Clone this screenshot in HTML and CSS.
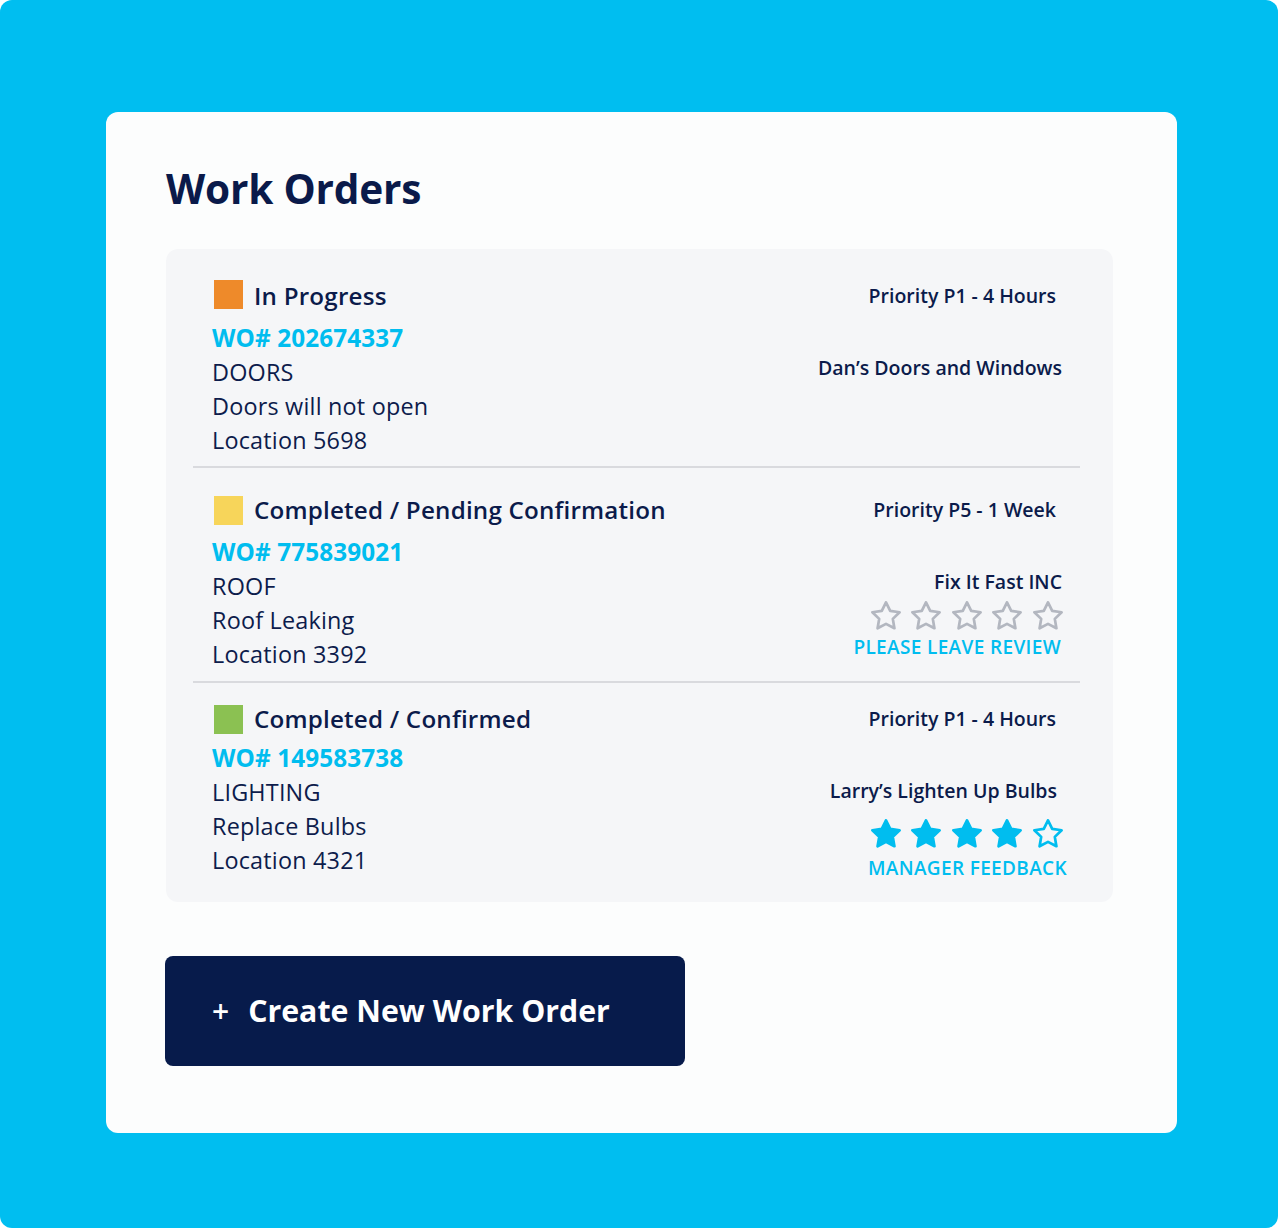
FILE: index.html
```html
<!DOCTYPE html>
<html lang="en">
<head>
<meta charset="utf-8">
<title>Work Orders</title>
<link rel="stylesheet" href="styles.css">
</head>
<body>
<div class="frame">
  <div class="card">
    <h1 class="title">Work Orders</h1>
    <div class="panel">
      <div class="order order--first">
        <div class="order-main">
          <div class="status"><span class="swatch swatch--orange"></span><span class="status-text">In Progress</span></div>
          <div class="wo">WO# 202674337</div>
          <div class="line">DOORS</div>
          <div class="line">Doors will not open</div>
          <div class="line">Location 5698</div>
        </div>
        <div class="order-side">
          <div class="priority">Priority P1 - 4 Hours</div>
          <div class="vendor">Dan’s Doors and Windows</div>
        </div>
      </div>

      <div class="order order--second">
        <div class="order-main">
          <div class="status"><span class="swatch swatch--yellow"></span><span class="status-text">Completed / Pending Confirmation</span></div>
          <div class="wo">WO# 775839021</div>
          <div class="line">ROOF</div>
          <div class="line">Roof Leaking</div>
          <div class="line">Location 3392</div>
        </div>
        <div class="order-side">
          <div class="priority">Priority P5 - 1 Week</div>
          <div class="vendor">Fix It Fast INC</div>
          <div class="rating rating--empty">
            <svg class="star" viewBox="1 1 22 21.3"><polygon points="12,2 15.09,8.26 22,9.27 17,14.14 18.18,21.02 12,17.77 5.82,21.02 7,14.14 2,9.27 8.91,8.26"/></svg>
            <svg class="star" viewBox="1 1 22 21.3"><polygon points="12,2 15.09,8.26 22,9.27 17,14.14 18.18,21.02 12,17.77 5.82,21.02 7,14.14 2,9.27 8.91,8.26"/></svg>
            <svg class="star" viewBox="1 1 22 21.3"><polygon points="12,2 15.09,8.26 22,9.27 17,14.14 18.18,21.02 12,17.77 5.82,21.02 7,14.14 2,9.27 8.91,8.26"/></svg>
            <svg class="star" viewBox="1 1 22 21.3"><polygon points="12,2 15.09,8.26 22,9.27 17,14.14 18.18,21.02 12,17.77 5.82,21.02 7,14.14 2,9.27 8.91,8.26"/></svg>
            <svg class="star" viewBox="1 1 22 21.3"><polygon points="12,2 15.09,8.26 22,9.27 17,14.14 18.18,21.02 12,17.77 5.82,21.02 7,14.14 2,9.27 8.91,8.26"/></svg>
          </div>
          <div class="side-link">PLEASE LEAVE REVIEW</div>
        </div>
      </div>

      <div class="order order--third">
        <div class="order-main">
          <div class="status"><span class="swatch swatch--green"></span><span class="status-text">Completed / Confirmed</span></div>
          <div class="wo">WO# 149583738</div>
          <div class="line">LIGHTING</div>
          <div class="line">Replace Bulbs</div>
          <div class="line">Location 4321</div>
        </div>
        <div class="order-side">
          <div class="priority">Priority P1 - 4 Hours</div>
          <div class="vendor">Larry’s Lighten Up Bulbs</div>
          <div class="rating rating--rated">
            <svg class="star star--on" viewBox="1 1 22 21.3"><polygon points="12,2 15.09,8.26 22,9.27 17,14.14 18.18,21.02 12,17.77 5.82,21.02 7,14.14 2,9.27 8.91,8.26"/></svg>
            <svg class="star star--on" viewBox="1 1 22 21.3"><polygon points="12,2 15.09,8.26 22,9.27 17,14.14 18.18,21.02 12,17.77 5.82,21.02 7,14.14 2,9.27 8.91,8.26"/></svg>
            <svg class="star star--on" viewBox="1 1 22 21.3"><polygon points="12,2 15.09,8.26 22,9.27 17,14.14 18.18,21.02 12,17.77 5.82,21.02 7,14.14 2,9.27 8.91,8.26"/></svg>
            <svg class="star star--on" viewBox="1 1 22 21.3"><polygon points="12,2 15.09,8.26 22,9.27 17,14.14 18.18,21.02 12,17.77 5.82,21.02 7,14.14 2,9.27 8.91,8.26"/></svg>
            <svg class="star" viewBox="1 1 22 21.3"><polygon points="12,2 15.09,8.26 22,9.27 17,14.14 18.18,21.02 12,17.77 5.82,21.02 7,14.14 2,9.27 8.91,8.26"/></svg>
          </div>
          <div class="side-link side-link--feedback">MANAGER FEEDBACK</div>
        </div>
      </div>
    </div>

    <button class="create-btn" type="button"><span class="plus">+</span><span>Create New Work Order</span></button>
  </div>
</div>
</body>
</html>
```

FILE: styles.css
```css
* {
  box-sizing: border-box;
}

html, body {
  margin: 0;
  padding: 0;
  background: #ffffff;
}

body {
  font-family: "Open Sans", "Noto Sans", "DejaVu Sans", sans-serif;
  color: #0b1b4b;
}

.frame {
  width: 1278px;
  height: 1228px;
  background: #00bef0;
  border-radius: 12px;
  padding: 112px 0 0 106px;
}

.card {
  width: 1071px;
  height: 1021px;
  background: #fcfdfd;
  border-radius: 12px;
  padding: 51.5px 0 0 60px;
}

.title {
  margin: 0 0 36px 0;
  font-size: 40.6px;
  line-height: 49px;
  font-weight: 700;
  color: #0a1a4a;
  letter-spacing: -0.2px;
}

.panel {
  width: 947px;
  height: 653px;
  background: #f5f6f8;
  border-radius: 12px;
  padding: 0 33px 0 27px;
}

.order {
  display: flex;
  justify-content: space-between;
  padding: 23.7px 20px 10.3px 19px;
  border-bottom: 2px solid #d9dade;
}

.order--first {
  padding-top: 29.7px;
  padding-bottom: 9.3px;
}

.order--third {
  padding-top: 17.7px;
  padding-bottom: 0;
  border-bottom: none;
}

.order-main {
  display: flex;
  flex-direction: column;
}

.status {
  display: flex;
  align-items: flex-start;
  height: 36px;
  margin-bottom: 7px;
}

.order--third .status {
  margin-bottom: 3.8px;
}

.swatch {
  width: 29px;
  height: 29px;
  margin: 2px 11px 0 2px;
  flex: none;
}

.order--second .swatch,
.order--third .swatch {
  margin-top: 4px;
}

.swatch--orange { background: #ee8a2a; }
.swatch--yellow { background: #f7d55a; }
.swatch--green  { background: #8bc152; }

.status-text {
  font-size: 24.2px;
  line-height: 36px;
  font-weight: 600;
  letter-spacing: 0.2px;
  color: #0b1b4b;
}

.wo {
  font-size: 24.3px;
  line-height: 34px;
  font-weight: 700;
  letter-spacing: 0.1px;
  color: #00bdef;
}

.line {
  font-size: 23.4px;
  line-height: 34px;
  font-weight: 400;
  letter-spacing: 0.2px;
  color: #0d1c4c;
}

.order-side {
  display: flex;
  flex-direction: column;
  align-items: flex-end;
}

.priority {
  font-size: 19.5px;
  line-height: 36px;
  font-weight: 600;
  padding-right: 4px;
  color: #0b1b4b;
}

.vendor {
  margin-top: 40px;
  margin-right: -2px;
  font-size: 19.5px;
  line-height: 28px;
  font-weight: 600;
  color: #0b1b4b;
}

.order--third .vendor {
  margin-right: 0;
  padding-right: 3px;
}

.rating {
  display: flex;
  gap: 10.6px;
  margin-top: 5px;
  margin-right: -3px;
}

.rating--rated {
  margin-top: 13.5px;
  margin-right: -3px;
}

.star {
  width: 30px;
  height: 29px;
  display: block;
  fill: none;
  stroke: #b3b7c0;
  stroke-width: 2;
  stroke-linejoin: round;
}

.rating--rated .star {
  stroke: #00bdef;
}

.star--on {
  fill: #00bdef;
}

.side-link {
  margin-top: 4.6px;
  margin-right: -1px;
  font-size: 19px;
  line-height: 24px;
  font-weight: 600;
  color: #00bdef;
  letter-spacing: 0.35px;
}

.side-link--feedback {
  margin-top: 8.6px;
  margin-right: -7px;
}

.create-btn {
  margin: 54px 0 0 -1px;
  width: 520px;
  height: 110px;
  border: none;
  border-radius: 8px;
  background: #071b4b;
  color: #ffffff;
  display: flex;
  align-items: center;
  padding: 0 0 0 47px;
  font-family: "Open Sans", "Noto Sans", "DejaVu Sans", sans-serif;
  font-size: 30.3px;
  font-weight: 700;
  cursor: pointer;
}

.plus {
  font-weight: 600;
  margin-right: 19px;
  font-size: 30px;
}
```
